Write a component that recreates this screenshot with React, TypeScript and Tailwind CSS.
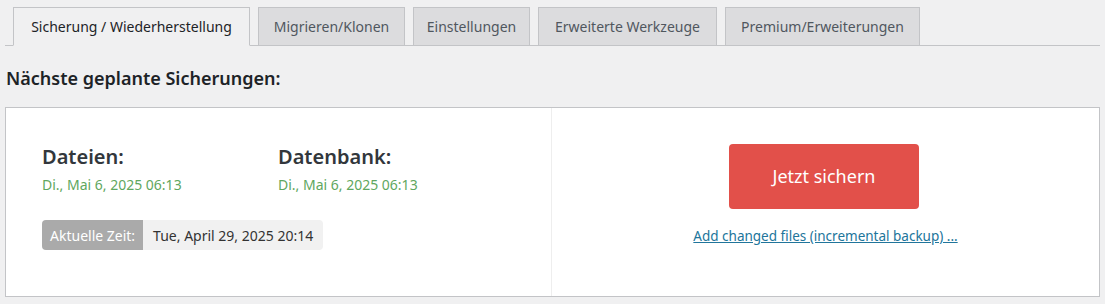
const tabs = [
  { label: 'Sicherung / Wiederherstellung', w: 'w-[237px]' },
  { label: 'Migrieren/Klonen', w: 'w-[147px]' },
  { label: 'Einstellungen', w: 'w-[117px]' },
  { label: 'Erweiterte Werkzeuge', w: 'w-[179px]' },
  { label: 'Premium/Erweiterungen', w: 'w-[195px]' },
];

function Tabs() {
  return (
    <div className="mx-[5px] flex gap-[8px] border-b border-[#c3c4c7] pl-[8px] pt-[7px]">
      {tabs.map((t, i) => (
        <div
          key={t.label}
          className={`-mb-px flex h-[39px] items-center justify-center border border-[#c3c4c7] text-[14px] ${t.w} ${
            i === 0
              ? 'border-b-[#f0f0f1] bg-[#f0f0f1] text-[#1d2327]'
              : 'bg-[#dcdcde] text-[#50575e]'
          }`}
        >
          {t.label}
        </div>
      ))}
    </div>
  );
}

function Schedule({ label, date }: { label: string; date: string }) {
  return (
    <div className="w-[236px]">
      <p className="text-[20px] font-semibold leading-[26px] text-[#32373c]">{label}</p>
      <p className="mt-[4px] text-[14px] text-[#5fa760]">{date}</p>
    </div>
  );
}

export default function App() {
  return (
    <div className="h-[304px] w-[1105px] bg-[#f0f0f1] font-['Noto_Sans',sans-serif]">
      <Tabs />
      <h2 className="mx-[6px] mt-[18px] text-[18px] font-semibold leading-[28px] text-[#1d2327]">
        Nächste geplante Sicherungen:
      </h2>
      <div className="mx-[5px] mt-[15px] flex h-[190px] border border-[#c3c4c7] bg-white">
        <div className="flex w-[546px] flex-col border-r border-[#eee] pl-[36px] pt-[36px]">
          <div className="flex">
            <Schedule label="Dateien:" date="Di., Mai 6, 2025 06:13" />
            <Schedule label="Datenbank:" date="Di., Mai 6, 2025 06:13" />
          </div>
          <div className="mt-[25px] flex h-[30px] w-fit overflow-hidden rounded-[4px] text-[14px]">
            <span className="flex items-center bg-[#aaaaaa] px-[8px] text-white">Aktuelle Zeit:</span>
            <span className="flex items-center bg-[#f1f1f1] px-[10px] text-[#333]">
              Tue, April 29, 2025 20:14
            </span>
          </div>
        </div>
        <div className="flex flex-1 flex-col items-center pt-[36px]">
          <button className="-ml-[3px] h-[65px] w-[190px] rounded-[4px] bg-[#e2504a] text-[18px] text-white">
            Jetzt sichern
          </button>
          <a href="#" className="mt-[17px] text-[13.5px] text-[#21759b] underline">
            Add changed files (incremental backup) ...
          </a>
        </div>
      </div>
    </div>
  );
}
